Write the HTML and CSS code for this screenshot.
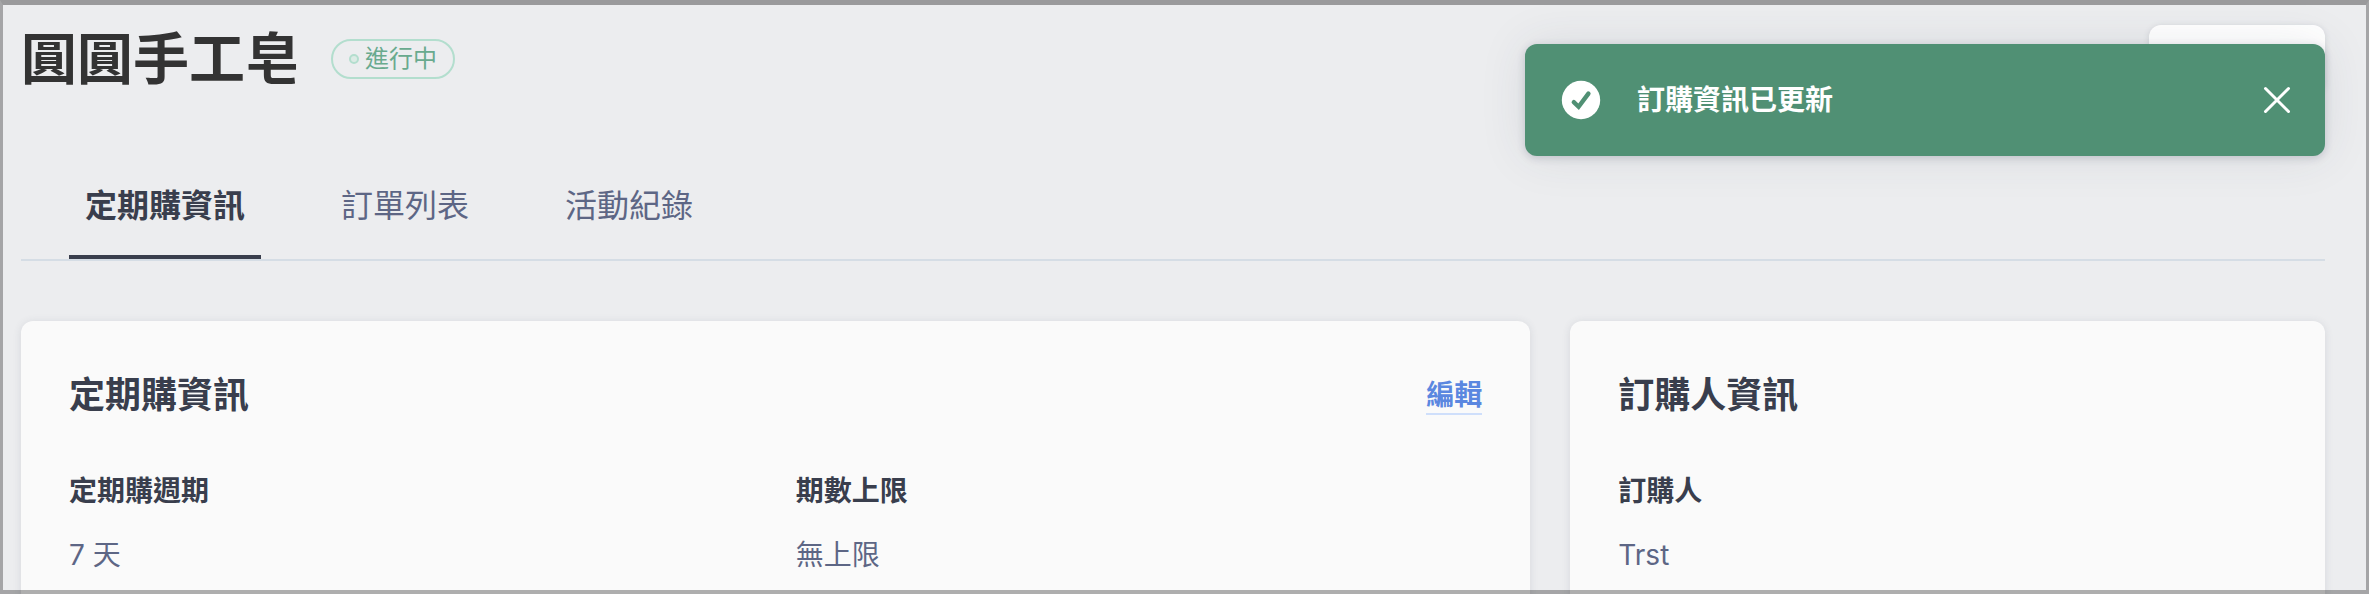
FILE: index.html
```
<!DOCTYPE html>
<html lang="zh-Hant">

<head>
    <meta charset="UTF-8">
    <meta name="viewport" content="width=device-width, initial-scale=1.0">
    <title>圓圓手工皂</title>
    <link rel="stylesheet" href="styles.css">
</head>

<body>
    <main class="page">
        <header class="page-header">
            <h1>圓圓手工皂</h1>
            <span class="badge"><i class="dot"></i>進行中</span>
            <button type="button" class="header-btn"></button>
        </header>

        <nav class="tabs">
            <a href="#" class="tab active">定期購資訊</a>
            <a href="#" class="tab">訂單列表</a>
            <a href="#" class="tab">活動紀錄</a>
        </nav>

        <div class="cards">
            <section class="card">
                <div class="card-head">
                    <h2>定期購資訊</h2>
                    <a href="#" class="edit">編輯</a>
                </div>
                <dl class="fields two-col">
                    <div>
                        <dt>定期購週期</dt>
                        <dd>7 天</dd>
                    </div>
                    <div>
                        <dt>期數上限</dt>
                        <dd>無上限</dd>
                    </div>
                </dl>
            </section>

            <section class="card">
                <div class="card-head">
                    <h2>訂購人資訊</h2>
                </div>
                <dl class="fields">
                    <div>
                        <dt>訂購人</dt>
                        <dd>Trst</dd>
                    </div>
                </dl>
            </section>
        </div>
    </main>

    <div class="toast" role="status">
        <svg class="toast-icon" viewBox="0 0 40 40" aria-hidden="true">
            <circle cx="20" cy="20" r="19.2" fill="#fff" />
            <path d="M12.8 22.2l4.8 4.6 9.8-13.2" fill="none" stroke="#509074" stroke-width="4.4" stroke-linecap="round" />
        </svg>
        <p>訂購資訊已更新</p>
        <button type="button" class="toast-close" aria-label="關閉">
            <svg viewBox="0 0 28 28">
                <path d="M2.5 2.5l23 23M25.5 2.5l-23 23" fill="none" stroke="#fff" stroke-width="3" stroke-linecap="round" />
            </svg>
        </button>
    </div>
</body>

</html>
```

FILE: styles.css
```
* {
    box-sizing: border-box;
}

body {
    margin: 0;
    height: 100vh;
    overflow: hidden;
    position: relative;
    background-color: #ecedef;
    color: #393e4d;
    font-family: Inter, "Noto Sans CJK TC", sans-serif;
    font-size: 28px;
    line-height: 40px;
}

/* window frame, drawn over the content */
body::after {
    content: "";
    position: fixed;
    inset: 0;
    border: 3px solid rgba(0, 0, 0, 0.3);
    border-top: 5px solid #9a9a9c;
    border-bottom-width: 4px;
    pointer-events: none;
}

h1,
h2,
p,
dl,
dd {
    margin: 0;
}

.page {
    padding: 25px 44px 0 21px;
}

.page-header {
    display: flex;
    align-items: center;
    height: 68px;
}

h1 {
    color: #333;
    font-size: 56px;
    line-height: 68px;
    font-weight: 700;
}

.badge {
    display: flex;
    align-items: center;
    gap: 6px;
    height: 40px;
    margin-left: 30px;
    padding: 0 16px;
    border: 2px solid #b3dece;
    border-radius: 20px;
    color: #69aa8e;
    font-size: 24px;
    line-height: 36px;
}

.dot {
    width: 10px;
    height: 10px;
    border: 2px solid #b3dece;
    border-radius: 50%;
    background: #dcebe5;
}

.header-btn {
    width: 176px;
    height: 68px;
    margin-left: auto;
    border: none;
    border-radius: 12px;
    background: #fff;
    box-shadow: 0 1px 6px rgba(60, 65, 90, 0.15);
}

.tabs {
    display: flex;
    gap: 64px;
    margin-top: 64px;
    padding: 0 48px;
    border-bottom: 2px solid #d5dde5;
}

.tab {
    padding: 25px 16px;
    border-bottom: 4px solid transparent;
    color: #5d6685;
    font-size: 32px;
    line-height: 48px;
    text-decoration: none;
}

.tab.active {
    border-color: #393e4d;
    color: #393e4d;
    font-weight: 700;
}

.cards {
    display: grid;
    grid-template-columns: 2fr 1fr;
    gap: 40px;
    margin-top: 60px;
}

.card {
    padding: 48px;
    border-radius: 12px;
    background: #fafafa;
    box-shadow: 0 1px 8px rgba(60, 65, 90, 0.12);
}

.card-head {
    display: flex;
    justify-content: space-between;
    align-items: flex-start;
    margin-bottom: 50px;
}

h2 {
    font-size: 36px;
    line-height: 52px;
    font-weight: 700;
}

.edit {
    padding-top: 8px;
    border-bottom: 2px solid #cfdffb;
    color: #5b87e0;
    font-weight: 700;
    line-height: 36px;
    text-decoration: none;
}

.fields {
    display: grid;
    gap: 40px;
}

.two-col {
    grid-template-columns: 1fr 1fr;
}

dt {
    font-weight: 700;
}

dd {
    margin-top: 24px;
    color: #5d6685;
}

.toast {
    position: absolute;
    top: 44px;
    right: 44px;
    display: flex;
    align-items: center;
    width: 800px;
    height: 112px;
    padding: 0 34px 0 36px;
    border-radius: 12px;
    background: #509074;
    color: #fff;
    box-shadow: 0 2px 8px rgba(50, 55, 80, 0.2), 0 0 48px rgba(50, 55, 80, 0.1);
}

.toast-icon {
    width: 40px;
    height: 40px;
}

.toast p {
    flex: 1;
    margin-left: 36px;
    font-weight: 700;
}

.toast-close {
    display: flex;
    padding: 0;
    border: none;
    background: none;
    cursor: pointer;
}

.toast-close svg {
    width: 28px;
    height: 28px;
}
```
